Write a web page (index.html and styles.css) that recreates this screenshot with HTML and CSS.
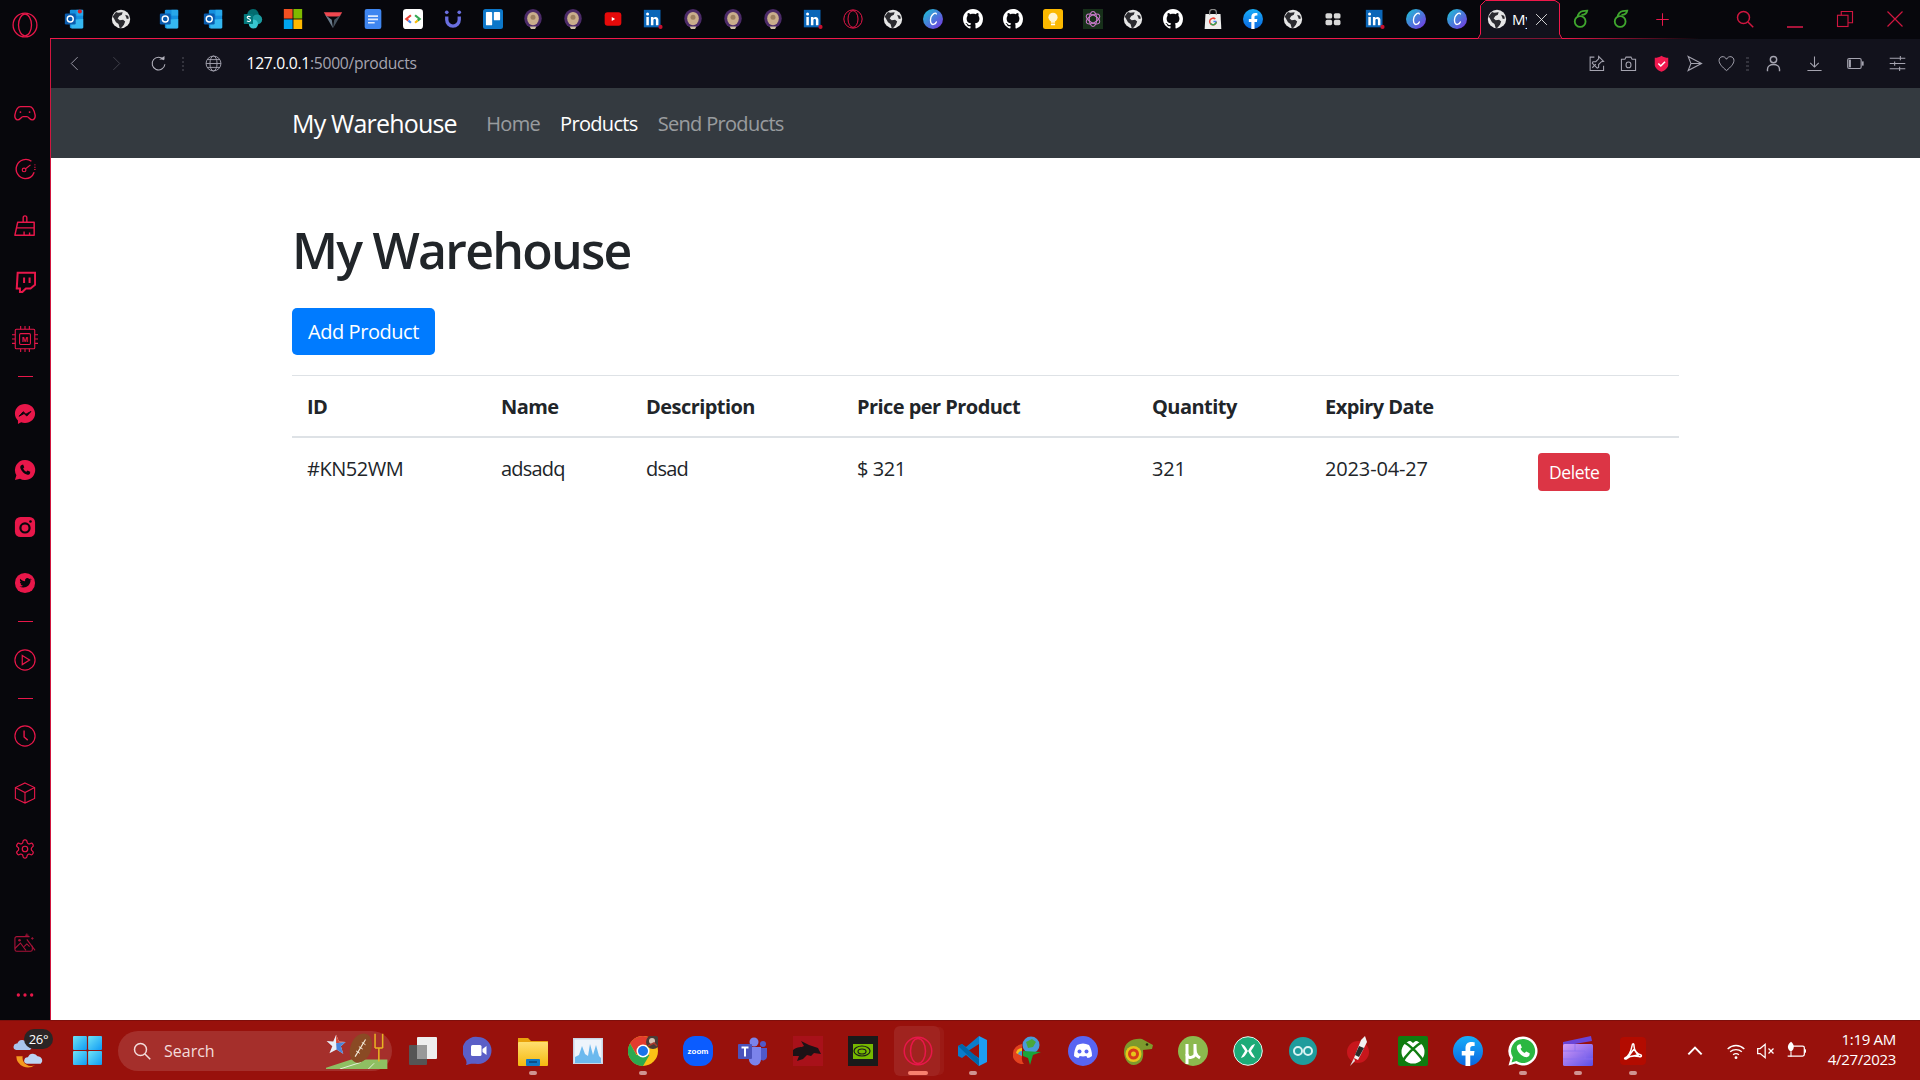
FILE: index.html
```html
<!DOCTYPE html>
<html lang="en">
<head>
<meta charset="utf-8">
<title>My Warehouse</title>
<link rel="stylesheet" href="styles.css">
</head>
<body>
<svg class="sprite" xmlns="http://www.w3.org/2000/svg" aria-hidden="true">
  <defs>
    <linearGradient id="g-canva" x1="0" y1="0" x2="1" y2="1"><stop offset="0" stop-color="#19c7d4"/><stop offset="1" stop-color="#7a2fe0"/></linearGradient>
    <linearGradient id="g-fb" x1="0" y1="0" x2="0" y2="1"><stop offset="0" stop-color="#19aef8"/><stop offset="1" stop-color="#0a66e0"/></linearGradient>
    <linearGradient id="g-win" x1="0" y1="0" x2="1" y2="1"><stop offset="0" stop-color="#6fe3f5"/><stop offset="1" stop-color="#0f9bf5"/></linearGradient>
    <linearGradient id="g-folder" x1="0" y1="0" x2="0" y2="1"><stop offset="0" stop-color="#ffdf70"/><stop offset="1" stop-color="#f5b90f"/></linearGradient>
    <linearGradient id="g-clip" x1="0" y1="0" x2="1" y2="1"><stop offset="0" stop-color="#d59cf5"/><stop offset="1" stop-color="#5a4ee8"/></linearGradient>
  </defs>
  <symbol id="i-outlook" viewBox="0 0 24 24"><rect x="7" y="1" width="16" height="22" rx="1.5" fill="#1490df"/><rect x="15" y="1" width="8" height="7" fill="#28a8ea"/><rect x="7" y="8" width="8" height="7" fill="#0f78d4"/><path d="M8 13l15-1v10a1.500 1.500 0 0 1-1.500 1.500H9z" fill="#35b8f1"/><rect x="1" y="5.500" width="13" height="13" rx="1.500" fill="#0a5cae"/><circle cx="7.500" cy="12" r="3.600" fill="none" stroke="#fff" stroke-width="1.700"/></symbol>
  <symbol id="i-outlook-dot" viewBox="0 0 24 24"><use href="#i-outlook"/><circle cx="19" cy="3" r="2.500" fill="#d4202c"/></symbol>
  <symbol id="i-globe" viewBox="0 0 24 24"><circle cx="12" cy="12" r="11" fill="#e6e6e6"/><path d="M6 3.500c3 2 6 0 8 .5l-1 3-3 1.500-2 3 2.500 2 4-.5 2.500 2-1.500 4-3 3.500-2 .5-1.500-5-3-2-2.500-4.500L2 9z" fill="#2b2b30"/><path d="M17 7l3.500 1 1 3.500-2.500.5z" fill="#2b2b30"/></symbol>
  <symbol id="i-sharepoint" viewBox="0 0 24 24"><circle cx="12" cy="7" r="7" fill="#036c70"/><circle cx="17" cy="12.500" r="6" fill="#1a9ba1"/><circle cx="12.500" cy="18" r="5.500" fill="#37c6d0"/><rect x="1" y="6" width="11" height="12" rx="1" fill="#03787c"/><path d="M9 9.500c-1-1-4-1-4 .8 0 1.900 4 1.100 4 3.300 0 1.700-3 1.700-4.300.7" fill="none" stroke="#fff" stroke-width="1.300"/></symbol>
  <symbol id="i-ms" viewBox="0 0 24 24"><rect x="1" y="0" width="10.500" height="11.500" fill="#f25022"/><rect x="12.500" y="0" width="10.500" height="11.500" fill="#7fba00"/><rect x="1" y="12.500" width="10.500" height="11.500" fill="#00a4ef"/><rect x="12.500" y="12.500" width="10.500" height="11.500" fill="#ffb900"/></symbol>
  <symbol id="i-vee" viewBox="0 0 24 24"><path d="M1 4h22l-3 5H4z" fill="#f0474f"/><path d="M1.500 5L12 23l-1.500-10L4 8z" fill="#6b7c8c"/><path d="M22.500 5L12 23l1.500-10L20 8z" fill="#45525e"/></symbol>
  <symbol id="i-docs" viewBox="0 0 24 24"><rect x="2" y="0" width="20" height="24" rx="2.500" fill="#3f86f0"/><path d="M6 8.500h12M6 12.500h12M6 16.500h8" stroke="#dfeafc" stroke-width="2"/></symbol>
  <symbol id="i-gcode" viewBox="0 0 24 24"><rect width="24" height="24" rx="4" fill="#fff"/><path d="M9.500 7.500L4 12l2.500 2" fill="none" stroke="#ea4335" stroke-width="2.600"/><path d="M6.500 14l3 2.500" fill="none" stroke="#4285f4" stroke-width="2.600"/><path d="M14.500 7.500l5.500 4.500-2.500 2" fill="none" stroke="#34a853" stroke-width="2.600"/><path d="M17.500 14l-3 2.500" fill="none" stroke="#fbbc04" stroke-width="2.600"/></symbol>
  <symbol id="i-magnet" viewBox="0 0 24 24"><path d="M4.500 9v4a7.500 7.500 0 0 0 15 0V9" fill="none" stroke="#6a6fe0" stroke-width="4"/><circle cx="4.500" cy="4" r="2.200" fill="#6a6fe0"/><circle cx="19.500" cy="4" r="2.200" fill="#6a6fe0"/></symbol>
  <symbol id="i-trello" viewBox="0 0 24 24"><rect width="24" height="24" rx="3" fill="#0c77c9"/><rect x="3.500" y="3.500" width="7.500" height="16" rx="1" fill="#fff"/><rect x="13" y="3.500" width="7.500" height="10" rx="1" fill="#fff"/></symbol>
  <symbol id="i-seal" viewBox="0 0 24 24"><ellipse cx="12" cy="11.500" rx="10.500" ry="11.500" fill="#4b2a68"/><ellipse cx="12" cy="11.500" rx="7" ry="8" fill="#c9ae8c"/><path d="M8 21h8l-1.500 3h-5z" fill="#cdbfa6"/><circle cx="12" cy="10" r="3" fill="#9c7f60"/></symbol>
  <symbol id="i-yt" viewBox="0 0 24 24"><rect x="2" y="4" width="20" height="16" rx="3.500" fill="#e60a0a"/><path d="M10.500 9.500v5l4-2.500z" fill="#fff"/></symbol>
  <symbol id="i-li" viewBox="0 0 24 24"><rect x="1" y="1" width="20" height="21" fill="#0a66b8"/><rect x="4" y="9.500" width="3" height="10" fill="#fff"/><circle cx="5.500" cy="6" r="1.800" fill="#fff"/><path d="M9.500 9.500h3v1.500c1.500-2.500 6-2 6 2v6.500h-3v-6c0-2-3-2-3 0v6h-3z" fill="#fff"/><circle cx="21" cy="21.500" r="2.500" fill="#c8102e"/></symbol>
  <symbol id="i-opera" viewBox="0 0 24 24"><circle cx="12" cy="12" r="11" fill="none" stroke="#e8174a" stroke-width="1.200"/><ellipse cx="12" cy="12" rx="6" ry="10" fill="none" stroke="#e8174a" stroke-width="1.200"/></symbol>
  <symbol id="i-canva" viewBox="0 0 24 24"><circle cx="12" cy="12" r="12" fill="url(#g-canva)"/><path d="M16 6c-1-2.500-5 0-6.500 4-1.500 5 0 9 3 8.500 1.500-.3 3-1.500 3.500-3" fill="none" stroke="#fff" stroke-width="1.600" stroke-linecap="round"/></symbol>
  <symbol id="i-github" viewBox="0 0 16 16"><path fill="#fff" d="M8 0C3.580 0 0 3.580 0 8c0 3.540 2.290 6.530 5.470 7.590.4.070.55-.17.55-.38 0-.19-.01-.82-.01-1.490-2.010.37-2.530-.49-2.690-.94-.09-.23-.48-.94-.82-1.130-.28-.15-.68-.52-.01-.53.63-.01 1.080.58 1.230.82.72 1.210 1.870.87 2.330.66.070-.52.28-.87.51-1.070-1.780-.2-3.640-.89-3.640-3.950 0-.87.31-1.590.82-2.150-.08-.2-.36-1.020.08-2.120 0 0 .67-.21 2.200.82.64-.18 1.320-.27 2-.27.68 0 1.360.09 2 .27 1.530-1.040 2.200-.82 2.200-.82.44 1.100.16 1.920.08 2.120.51.56.82 1.270.82 2.150 0 3.070-1.870 3.750-3.650 3.950.29.25.54.73.54 1.480 0 1.070-.01 1.930-.01 2.200 0 .21.15.46.55.38A8.013 8.013 0 0016 8c0-4.420-3.580-8-8-8z"/></symbol>
  <symbol id="i-keep" viewBox="0 0 24 24"><rect width="24" height="24" rx="3" fill="#fbb800"/><circle cx="12" cy="10" r="5.500" fill="#fff4d0"/><rect x="9.500" y="14" width="5" height="2.500" fill="#fff4d0"/><rect x="9.500" y="17.500" width="5" height="2" fill="#fff"/></symbol>
  <symbol id="i-gpt" viewBox="0 0 24 24"><rect width="24" height="24" fill="#17301a"/><g fill="none" stroke="#c77ac9" stroke-width="1.300"><ellipse cx="12" cy="12" rx="4.500" ry="9"/><ellipse cx="12" cy="12" rx="4.500" ry="9" transform="rotate(60 12 12)"/><ellipse cx="12" cy="12" rx="4.500" ry="9" transform="rotate(120 12 12)"/></g></symbol>
  <symbol id="i-bag" viewBox="0 0 24 24"><path d="M3 6h18l1 18H2z" fill="#eee"/><path d="M8 7V3.500a4 3 0 0 1 8 0V7" fill="none" stroke="#8a8a8a" stroke-width="1.500"/><path d="M16 15a4 4 0 1 1-1.200-2.900" fill="none" stroke="#ea4335" stroke-width="1.800"/><path d="M16 15.500a4 4 0 0 1-7 2" fill="none" stroke="#34a853" stroke-width="1.800"/><path d="M12.500 15H16" stroke="#4285f4" stroke-width="1.800"/></symbol>
  <symbol id="i-fb" viewBox="0 0 24 24"><circle cx="12" cy="12" r="12" fill="url(#g-fb)"/><path fill="#fff" d="M16.700 15.500l.5-3.500h-3.400V9.800c0-1 .5-1.900 2-1.900h1.500V5s-1.400-.2-2.700-.2c-2.800 0-4.600 1.700-4.600 4.700V12H7v3.500h3V24h3.800v-8.500z"/></symbol>
  <symbol id="i-apps" viewBox="0 0 24 24"><rect x="3" y="5" width="8" height="6.500" rx="2" fill="#d8d8d8"/><rect x="13" y="5" width="8" height="6.500" rx="2" fill="#d8d8d8"/><rect x="3" y="13" width="8" height="6.500" rx="2" fill="#d8d8d8"/><rect x="13" y="13" width="8" height="6.500" rx="2" fill="#d8d8d8"/></symbol>
  <symbol id="i-leaf" viewBox="0 0 24 24"><circle cx="11" cy="15" r="6.500" fill="none" stroke="#3fa62e" stroke-width="2.200"/><path d="M8 10c0-4 3-7 6-7.500 2-.3 4-.5 5.500-.5-.5 3-3 5-7 5" fill="none" stroke="#3fa62e" stroke-width="2.200"/></symbol>

  <symbol id="n-back" viewBox="0 0 24 24"><path d="M15 3L6 12l9 9" fill="none" stroke="currentColor" stroke-width="1.300"/></symbol>
  <symbol id="n-forward" viewBox="0 0 24 24"><path d="M9 3l9 9-9 9" fill="none" stroke="currentColor" stroke-width="1.300"/></symbol>
  <symbol id="n-reload" viewBox="0 0 24 24"><path d="M19.500 7A9 9 0 1 0 21 13" fill="none" stroke="currentColor" stroke-width="1.500"/><path d="M13 6.500h7.500V1.500z" fill="currentColor"/></symbol>
  <symbol id="n-web" viewBox="0 0 24 24"><g fill="none" stroke="currentColor" stroke-width="1.300"><circle cx="12" cy="12" r="10.500"/><ellipse cx="12" cy="12" rx="5" ry="10.500"/><path d="M1.500 12h21M3 6.500h18M3 17.500h18"/></g></symbol>
  <symbol id="n-pin" viewBox="0 0 24 24"><path d="M9 3H3v19h19v-7M15 2l7 7-3 .5-4 4v4l-2 1-7-7 1-2h4l4-4z" fill="none" stroke="currentColor" stroke-width="1.500"/><path d="M6 18l5-5" stroke="currentColor" stroke-width="1.500"/></symbol>
  <symbol id="n-camera" viewBox="0 0 24 24"><path d="M2 6h5l1.500-3h7L17 6h5v16H2z" fill="none" stroke="currentColor" stroke-width="1.500"/><ellipse cx="12" cy="14" rx="3.500" ry="4" fill="none" stroke="currentColor" stroke-width="1.500"/></symbol>
  <symbol id="n-shield" viewBox="0 0 24 24"><path d="M12 1c3 2 6 3 9.500 3v10c0 4-5 8-9.500 9.500C7.500 22 2.500 18 2.500 14V4C6 4 9 3 12 1z" fill="#f0194f"/><path d="M7.500 12l3.500 3.500 6-6" fill="none" stroke="#fff" stroke-width="2.200"/></symbol>
  <symbol id="n-send" viewBox="0 0 24 24"><path d="M3 2l19 10L3 22l4-10z M7 12h15" fill="none" stroke="currentColor" stroke-width="1.500"/></symbol>
  <symbol id="n-heart" viewBox="0 0 24 24"><path d="M12 22C6 17 1.500 12.500 1.500 7.500 1.500 2 9 0 12 6c3-6 10.500-4 10.500 1.500C22.500 12.500 18 17 12 22z" fill="none" stroke="currentColor" stroke-width="1.400"/></symbol>
  <symbol id="n-user" viewBox="0 0 24 24"><circle cx="12" cy="6.500" r="4.500" fill="none" stroke="currentColor" stroke-width="2"/><path d="M3.500 23v-3c0-4 4-6.500 8.500-6.500s8.500 2.500 8.500 6.500v3" fill="none" stroke="currentColor" stroke-width="2"/></symbol>
  <symbol id="n-download" viewBox="0 0 24 24"><path d="M12 2v15M6 11l6 6 6-6M2 22h20" fill="none" stroke="currentColor" stroke-width="1.500"/></symbol>
  <symbol id="n-battery" viewBox="0 0 24 24"><rect x="1" y="5" width="19" height="14" rx="2" fill="none" stroke="currentColor" stroke-width="1.600"/><rect x="2.500" y="6.500" width="3" height="11" fill="currentColor"/><rect x="21" y="9" width="2.500" height="6" fill="currentColor"/></symbol>
  <symbol id="n-sliders" viewBox="0 0 24 24"><path d="M1 4.500h22M1 12h22M1 19.500h22M16 1.500v6M8 9v6M15 16.500v6" fill="none" stroke="currentColor" stroke-width="1.500"/></symbol>
  <symbol id="n-search" viewBox="0 0 24 24"><circle cx="10" cy="10" r="8" fill="none" stroke="currentColor" stroke-width="2"/><path d="M16 16l7 7" stroke="currentColor" stroke-width="2"/></symbol>
  <symbol id="n-restore" viewBox="0 0 24 24"><rect x="2" y="7" width="14" height="15" fill="none" stroke="currentColor" stroke-width="1.500"/><path d="M7 7V2h15v15h-6" fill="none" stroke="currentColor" stroke-width="1.500"/></symbol>
  <symbol id="n-close" viewBox="0 0 24 24"><path d="M2 2l20 20M22 2L2 22" stroke="currentColor" stroke-width="1.600"/></symbol>
  <symbol id="n-plus" viewBox="0 0 24 24"><path d="M12 2v20M2 12h20" stroke="currentColor" stroke-width="1.600"/></symbol>

  <symbol id="s-game" viewBox="0 0 24 24"><path d="M7 5h10c3 0 5 4 6 9 .5 3-1 5.500-3 5.500-3 0-3.500-3.500-6-3.500h-4c-2.500 0-3 3.500-6 3.500-2 0-3.500-2.500-3-5.500C2 9 4 5 7 5z" fill="none" stroke="currentColor" stroke-width="1.500"/><circle cx="7" cy="11" r="1" fill="currentColor"/><circle cx="17" cy="11" r="1" fill="currentColor"/></symbol>
  <symbol id="s-gauge" viewBox="0 0 24 24"><path d="M19 3.500A10.500 10.500 0 1 0 12 22.500c5 0 8.500-3 10-7" fill="none" stroke="currentColor" stroke-width="1.500"/><circle cx="11" cy="13" r="2" fill="none" stroke="currentColor" stroke-width="1.300"/><path d="M13 11.500l5-4" stroke="currentColor" stroke-width="1.300"/><path d="M22.800 7v6" stroke="currentColor" stroke-width="1.500" stroke-dasharray="1 1.500"/></symbol>
  <symbol id="s-broom" viewBox="0 0 24 24"><path d="M10 8V3a2 2 0 0 1 4 0v5" fill="none" stroke="currentColor" stroke-width="1.500"/><path d="M4 8h18v14H1z" fill="none" stroke="currentColor" stroke-width="1.600" stroke-linejoin="round"/><path d="M3 14h19M11 22v-4M17 22v-3" stroke="currentColor" stroke-width="1.500"/></symbol>
  <symbol id="s-twitch" viewBox="0 0 24 24"><path d="M4 2h19v13l-5 4h-5l-4 4H6.500v-4H3z" fill="none" stroke="currentColor" stroke-width="2.200"/><path d="M11 7v6M17 7v6" stroke="currentColor" stroke-width="2.200"/></symbol>
  <symbol id="s-chip" viewBox="0 0 24 24"><g fill="none" stroke="currentColor" stroke-width="1"><rect x="3" y="3" width="18" height="18" rx="1"/><rect x="7" y="7" width="10" height="10" rx="1"/><path d="M8 3V0M12 3V0M16 3V0M8 24v-3M12 24v-3M16 24v-3M3 8H0M3 12H0M3 16H0M24 8h-3M24 12h-3M24 16h-3"/></g></symbol>
  <symbol id="s-messenger" viewBox="0 0 24 24"><path d="M12 1C5.700 1 1 5.500 1 11.500c0 3.100 1.300 5.800 3.300 7.700V23l3.500-2c1.300.5 2.700.7 4.200.7 6.300 0 11-4.500 11-10.200S18.300 1 12 1z" fill="currentColor"/><path d="M5.500 14.500l4.500-5 3 2.700 5.500-3-4.500 5-3-2.700z" fill="#07070c" stroke="#07070c"/></symbol>
  <symbol id="s-whatsapp" viewBox="0 0 24 24"><path d="M12 1a11 11 0 0 0-9.400 16.600L1 23l5.600-1.500A11 11 0 1 0 12 1z" fill="currentColor"/><path d="M8.500 6.500c-1.500.5-2 2-1.500 3.500 1 3 4 6 7 7 1.500.5 3 0 3.500-1.500l.2-1.500-3-1.500-1.200 1.300c-1.500-.5-3-2-3.500-3.500l1.200-1.200-1.300-3z" fill="#07070c"/></symbol>
  <symbol id="s-instagram" viewBox="0 0 24 24"><rect x="1" y="1" width="22" height="22" rx="6" fill="currentColor"/><circle cx="12" cy="13" r="5" fill="none" stroke="#07070c" stroke-width="2.400"/><circle cx="18" cy="6" r="1.400" fill="#07070c"/></symbol>
  <symbol id="s-twitter" viewBox="0 0 24 24"><circle cx="12" cy="12" r="11" fill="currentColor"/><path d="M18.500 8c-.5.200-1 .4-1.500.4.500-.3 1-.8 1.200-1.400-.5.300-1 .5-1.600.6a2.600 2.600 0 0 0-4.500 2.400c-2.100-.1-4-1.100-5.300-2.700-.7 1.200-.3 2.700.8 3.500-.4 0-.8-.1-1.200-.3 0 1.300.9 2.400 2.100 2.600-.4.100-.8.100-1.200 0 .3 1.100 1.300 1.800 2.500 1.800-1 .8-2.400 1.200-3.800 1 5.500 3 12.300-.5 12-7.100.5-.2 1-.5 1.500-.8z" fill="#07070c"/></symbol>
  <symbol id="s-play" viewBox="0 0 24 24"><circle cx="12" cy="12" r="11" fill="none" stroke="currentColor" stroke-width="1.300"/><path d="M9 7l8 5-8 5z" fill="none" stroke="currentColor" stroke-width="1.300"/></symbol>
  <symbol id="s-clock" viewBox="0 0 24 24"><circle cx="12" cy="12" r="11" fill="none" stroke="currentColor" stroke-width="1.300"/><path d="M11 6v7l4 3.500" fill="none" stroke="currentColor" stroke-width="1.500"/></symbol>
  <symbol id="s-cube" viewBox="0 0 24 24"><path d="M12 1l10.500 5v12L12 23 1.500 18V6zM1.500 6L12 11.500 22.500 6M12 11.500V23" fill="none" stroke="currentColor" stroke-width="1.200"/></symbol>
  <symbol id="s-gear" viewBox="0 0 24 24"><path fill="none" stroke="currentColor" stroke-width="1.300" d="M12.220 2h-.44a2 2 0 0 0-2 2v.18a2 2 0 0 1-1 1.730l-.43.25a2 2 0 0 1-2 0l-.15-.08a2 2 0 0 0-2.730.73l-.22.38a2 2 0 0 0 .73 2.730l.15.1a2 2 0 0 1 1 1.720v.51a2 2 0 0 1-1 1.740l-.15.09a2 2 0 0 0-.73 2.730l.22.38a2 2 0 0 0 2.730.73l.15-.08a2 2 0 0 1 2 0l.43.25a2 2 0 0 1 1 1.730V20a2 2 0 0 0 2 2h.44a2 2 0 0 0 2-2v-.18a2 2 0 0 1 1-1.730l.43-.25a2 2 0 0 1 2 0l.15.08a2 2 0 0 0 2.730-.73l.22-.39a2 2 0 0 0-.73-2.730l-.15-.08a2 2 0 0 1-1-1.740v-.5a2 2 0 0 1 1-1.740l.15-.09a2 2 0 0 0 .73-2.730l-.22-.38a2 2 0 0 0-2.730-.73l-.15.08a2 2 0 0 1-2 0l-.43-.25a2 2 0 0 1-1-1.730V4a2 2 0 0 0-2-2z"/><circle cx="12" cy="12" r="3" fill="none" stroke="currentColor" stroke-width="1.300"/></symbol>
  <symbol id="s-image" viewBox="0 0 24 24"><path d="M17 5H3a2 2 0 0 0-2 2v12a2 2 0 0 0 2 2h15a2 2 0 0 0 2-2v-4" fill="none" stroke="currentColor" stroke-width="1.200"/><path d="M1 18l6-6 6 8M11 16l3-3 3 3" fill="none" stroke="currentColor" stroke-width="1.200"/><circle cx="6" cy="9" r="1.400" fill="currentColor"/><path d="M14 8l9 12" stroke="currentColor" stroke-width="1.200"/><path d="M14 1.500v4M12 3.500h4M20 5.500v3M18.500 7h3" stroke="currentColor" stroke-width=".9"/></symbol>
  <symbol id="s-dots" viewBox="0 0 24 24"><circle cx="4" cy="12" r="2" fill="currentColor"/><circle cx="12" cy="12" r="2" fill="currentColor"/><circle cx="20" cy="12" r="2" fill="currentColor"/></symbol>

  <symbol id="t-windows" viewBox="0 0 24 24"><rect width="11.500" height="11.500" x="0" y="0" rx=".8" fill="url(#g-win)"/><rect width="11.500" height="11.500" x="12.500" y="0" rx=".8" fill="url(#g-win)"/><rect width="11.500" height="11.500" x="0" y="12.500" rx=".8" fill="url(#g-win)"/><rect width="11.500" height="11.500" x="12.500" y="12.500" rx=".8" fill="url(#g-win)"/></symbol>
  <symbol id="t-weather" viewBox="0 0 32 32"><path d="M4 14a3 3 0 0 1 1-6 5 5 0 0 1 9-1 4 4 0 0 1 3 7z" fill="#a9c4ec"/><path d="M4 20a11 11 0 0 0 18 8 8 8 0 0 1-12-8z" fill="#f59a1f"/><path d="M14 27a3 3 0 0 1 1-6 5 5 0 0 1 9-1 4 4 0 0 1 3 7z" fill="#bcd4f2"/></symbol>
  <symbol id="t-football" viewBox="0 0 64 40"><path d="M-5 40L26 30h38v10z" fill="#8fbf62"/><path d="M14 40l22-7M44 40l6-6" stroke="#e8f0dc" stroke-width="1"/><path d="M10 4l3 7 7 .5-5 4.500 2.500 8-7-4.500-7.500 4 3-7.500L0 10.500l7 .5z" fill="#e9eef8"/><path d="M10 4l3 7 7 .5-10 1.500z" fill="#d8432f"/><path d="M10 13l10-1.500-5 4.500 2.500 8-7-4.500z" fill="#4a82d8"/><ellipse cx="36" cy="18" rx="11" ry="16" transform="rotate(22 36 18)" fill="#8a4a24"/><path d="M30 27l11-18" stroke="#f3ead8" stroke-width="1.200"/><path d="M31 21l4 2.500M34 16.500l4 2.500M37 12l4 2.500" stroke="#f3ead8" stroke-width="1"/><path d="M51 3v15M59 3v15M51 18h8M55 18v14" fill="none" stroke="#e8b422" stroke-width="1.600"/></symbol>
  <symbol id="t-taskview" viewBox="0 0 30 30"><rect x="1" y="9" width="18" height="20" rx="1" fill="#555"/><rect x="9" y="1" width="20" height="22" rx="1" fill="#eee"/><rect x="9" y="9" width="10" height="14" fill="#999"/></symbol>
  <symbol id="t-meet" viewBox="0 0 30 30"><path d="M15 1a13.500 13.500 0 0 1 0 27c-3 0-6-.5-8 0-3 1-4 1-4 1 1-2 .5-4-.5-6A13.500 13.500 0 0 1 15 1z" fill="#5b5fc7"/><rect x="8" y="9" width="10.500" height="11" rx="1.500" fill="#fff"/><path d="M19.500 13l4-3v9l-4-3z" fill="#fff"/></symbol>
  <symbol id="t-folder" viewBox="0 0 30 30"><path d="M0 2h10l3 3h17v4H0z" fill="#e9a20c"/><rect y="6" width="30" height="24" rx="1" fill="url(#g-folder)"/><rect x="8" y="23" width="14" height="7" rx="1" fill="#0f78c4"/><rect x="11" y="25" width="8" height="2" fill="#0b4f8a"/></symbol>
  <symbol id="t-monitor" viewBox="0 0 30 30"><rect y="2" width="30" height="26" fill="#c9d6e6"/><rect x="1.500" y="3.500" width="27" height="23" fill="#eef4fb"/><path d="M2 21l4-2 3-9 3 8 3 2 2-12 3 11 3-10 3 11 2 2v5H2z" fill="#6cb9ee"/></symbol>
  <symbol id="t-chrome" viewBox="0 0 30 30"><circle cx="15" cy="15" r="15" fill="#fbc116"/><path d="M15 0A15 15 0 0 0 2 7.500l6.500 11L15 9h13A15 15 0 0 0 15 0z" fill="#e33b2e"/><path d="M2 7.500A15 15 0 0 0 15 30l6.500-11h-13z" fill="#2da94f"/><circle cx="15" cy="15" r="6.500" fill="#fff"/><circle cx="15" cy="15" r="5" fill="#1a73e8"/><circle cx="25" cy="6" r="7" fill="#4a3b36"/><circle cx="24" cy="5" r="3" fill="#d8c2b2"/><path d="M20 10l6-3 3 3" stroke="#a83a2c" stroke-width="1.500" fill="none"/></symbol>
  <symbol id="t-zoom" viewBox="0 0 30 30"><rect width="30" height="30" rx="12" fill="#0b5cff"/></symbol>
  <symbol id="t-teams" viewBox="0 0 30 30"><circle cx="16" cy="6" r="4.500" fill="#7b83eb"/><circle cx="25" cy="8" r="3" fill="#5059c9"/><path d="M21 12h8v9a4 4 0 0 1-7 2z" fill="#5059c9"/><path d="M9 11h14v12a6 6 0 0 1-12 1z" fill="#7b83eb"/><rect x="0" y="8" width="14" height="15" rx="1" fill="#4b53bc"/><path d="M3.500 11.500h7M7 11.500v9" stroke="#fff" stroke-width="2"/></symbol>
  <symbol id="t-dragon" viewBox="0 0 30 30"><rect width="30" height="30" fill="#a8111a"/><path d="M0 14c5-4 8-2 11-4l-3-5 8 4 9 3 3 6-7-1-3 3-4-1-4 4-6 2 2-5-6 0z" fill="#1d1216"/></symbol>
  <symbol id="t-nvidia" viewBox="0 0 30 30"><rect width="30" height="30" fill="#1a1a1a"/><rect x="5" y="8" width="20" height="15" fill="#76b900"/><g fill="none" stroke="#1a1a1a" stroke-width="1.200"><ellipse cx="14" cy="15" rx="8" ry="5"/><ellipse cx="14" cy="15.500" rx="4" ry="2.500"/></g></symbol>
  <symbol id="t-vscode" viewBox="0 0 30 30"><path d="M21 0l8 4v22l-8 4z" fill="#1f9cf0"/><path d="M21 0v8L10 15l11 7v8L8 19 4 22 0 20V10l4-2 4 3z" fill="#0a7ccb"/><path d="M0 10l4-2 17 15v7z" fill="#0065a9"/></symbol>
  <symbol id="t-idm" viewBox="0 0 30 30"><path d="M0 17a11 10 0 0 1 9-9v13a8 8 0 0 0 2 7 10 9 0 0 1-11-11z" fill="#e3421f"/><path d="M3 17a7 6 0 0 1 6-5v8z" fill="#f2c21a"/><path d="M5 18a4 4 0 0 1 4-3v5z" fill="#3f9be0"/><circle cx="18" cy="9" r="8.500" fill="#4a9bd8"/><path d="M13 6l6-3 4 3-3 5-5 1z" fill="#4aa83a"/><path d="M10 15l18 1-8 3-3 10-2-7-5-2z" fill="#19a53a"/></symbol>
  <symbol id="t-discord" viewBox="0 0 30 30"><circle cx="15" cy="15" r="15" fill="#5865f2"/><path d="M9 9c4-2 8-2 12 0 2 3 3 7 3 11-1.500 1-3 2-4.500 2l-1.200-2c-2 .6-4.600.6-6.600 0L10.500 22C9 22 7.500 21 6 20c0-4 1-8 3-11z" fill="#fff"/><circle cx="11.500" cy="15.500" r="2" fill="#5865f2"/><circle cx="18.500" cy="15.500" r="2" fill="#5865f2"/></symbol>
  <symbol id="t-chameleon" viewBox="0 0 30 30"><path d="M1 16C1 6 10 2 19 3l11 6-1 4-9 1c1 8-1 14-9 15C5 29.500 1 22 1 16z" fill="#7d9a2d"/><circle cx="10.500" cy="18" r="8" fill="#e6c41a"/><circle cx="10.500" cy="18" r="5.500" fill="#d83a1a"/><circle cx="10.500" cy="18" r="2.500" fill="#e6c41a"/><circle cx="24" cy="8.500" r="1.300" fill="#26300c"/></symbol>
  <symbol id="t-utorrent" viewBox="0 0 30 30"><circle cx="15" cy="15" r="15" fill="#8cb94e"/><path d="M9 8v10c0 4 5 5 8 1V8M17 8c0 8 0 11 5 14" fill="none" stroke="#fff" stroke-width="3"/><path d="M9 18v10" stroke="#fff" stroke-width="3"/></symbol>
  <symbol id="t-xmind" viewBox="0 0 30 30"><circle cx="15" cy="15" r="14.300" fill="#1dab78" stroke="#e6f5ee" stroke-width="1"/><path d="M8 8c4 1 5 4 7 7-2 3-3 6-7 7 1-3 3-5 4-7-1-2-3-4-4-7zM22 8c-4 1-5 4-7 7 2 3 3 6 7 7-1-3-3-5-4-7 1-2 3-4 4-7z" fill="#fff"/></symbol>
  <symbol id="t-arduino" viewBox="0 0 30 30"><circle cx="15" cy="15" r="14" fill="#1f9c9c"/><circle cx="10" cy="15" r="4" fill="none" stroke="#d9f2f2" stroke-width="2"/><circle cx="20" cy="15" r="4" fill="none" stroke="#d9f2f2" stroke-width="2"/></symbol>
  <symbol id="t-rocket" viewBox="0 0 30 30"><circle cx="15" cy="16" r="11" fill="#c8161c"/><path d="M22 0l2 6-9 18-4-2 7-18z" fill="#f2f2f2"/><path d="M11 22l-4 8 5-5z" fill="#e0e0e0"/><path d="M16 10l5 2-5 9-4-2z" fill="#2b2b2b"/></symbol>
  <symbol id="t-xbox" viewBox="0 0 30 30"><rect width="30" height="30" rx="2" fill="#107c10"/><circle cx="15" cy="16" r="11.500" fill="#fff"/><path d="M3 4C8 7 20 15 27 28M27 4C22 7 10 15 3 28" fill="none" stroke="#107c10" stroke-width="2.600"/><path d="M8 4c3 0 5 1 7 3 2-2 4-3 7-3l-7-1z" fill="#107c10"/></symbol>
  <symbol id="t-whatsapp" viewBox="0 0 30 30"><path d="M15 0.500A14.500 14.500 0 0 0 2.500 22.500L0.500 29.500l7.200-2A14.500 14.500 0 1 0 15 .5z" fill="#fff"/><path d="M15 3A12 12 0 0 0 5 21.500L3.500 26.500l5-1.500A12 12 0 1 0 15 3z" fill="#2bb741"/><path d="M11 8.500c-2 .5-2.500 2.500-2 4.500 1.200 3.600 4.500 7 8 8 2 .5 4-.2 4.500-2l.2-1.800-3.500-1.800-1.500 1.600c-1.800-.6-3.500-2.400-4.200-4.200l1.400-1.400-1.500-3.500z" fill="#fff"/></symbol>
  <symbol id="t-clip" viewBox="0 0 30 30"><path d="M0 6l28-6 1 5L0 10z" fill="#6a45d8"/><rect y="8" width="30" height="22" rx="1.500" fill="url(#g-clip)"/><path d="M0 15h12v-7M12 15h10v8M0 23h30" stroke="#8a6ef0" stroke-width=".8" fill="none"/></symbol>
  <symbol id="t-acrobat" viewBox="0 0 30 30"><rect x="2" y="1" width="26" height="28" rx="4" fill="#b30b00"/><path d="M7 22c3-1 6-6 7-12 .3-3 2-3 2 0 0 4 3 8 7 9 1 1 0 2-2 1.500-5-1-9-1-12 2-2 1-3 0-2-.5zM10 21l6-8 4 6z" fill="none" stroke="#fff" stroke-width="1.500"/></symbol>
  <symbol id="t-chevron" viewBox="0 0 24 24"><path d="M4 16l8-8 8 8" fill="none" stroke="#fff" stroke-width="2.400"/></symbol>
  <symbol id="t-wifi" viewBox="0 0 24 24"><g fill="none" stroke="#fff" stroke-width="1.600"><path d="M2 9.500c6-5.500 14-5.500 20 0"/><path d="M5 13c4-3.500 10-3.500 14 0"/><path d="M8.500 16.500c2-1.500 5-1.500 7 0"/></g><circle cx="12" cy="20" r="1.700" fill="#fff"/></symbol>
  <symbol id="t-mute" viewBox="0 0 24 24"><path d="M2 9h3l6-5v16l-6-5H2z" fill="none" stroke="#fff" stroke-width="1.500"/><path d="M15 9l6 6M21 9l-6 6" stroke="#fff" stroke-width="1.500"/></symbol>
  <symbol id="t-battery" viewBox="0 0 24 24"><path d="M8 6h12a2 2 0 0 1 2 2v8a2 2 0 0 1-2 2H2" fill="none" stroke="#fff" stroke-width="1.500"/><path d="M6 1c4 3 5 8 0 12C1 10 1 5 6 1z" fill="#fff"/><rect x="22.500" y="10" width="1.500" height="4" fill="#fff"/><path d="M6 13v6" stroke="#fff" stroke-width="1.300"/></symbol>
</svg>

<div class="desktop">
  <div class="upper">
    <aside class="sidebar">
      <div class="side-logo"><svg class="ico-logo"><use href="#i-opera"/></svg></div>
      <div class="side-item"><svg class="ico-side"><use href="#s-game"/></svg></div>
      <div class="side-item"><svg class="ico-side"><use href="#s-gauge"/></svg></div>
      <div class="side-item"><svg class="ico-side"><use href="#s-broom"/></svg></div>
      <div class="side-item"><svg class="ico-side"><use href="#s-twitch"/></svg></div>
      <div class="side-item"><svg class="ico-chip" viewBox="0 0 24 24"><use href="#s-chip"/><text class="chip-m" x="12" y="14.500" text-anchor="middle">M</text></svg></div>
      <div class="side-sep"></div>
      <div class="side-item"><svg class="ico-side"><use href="#s-messenger"/></svg></div>
      <div class="side-item"><svg class="ico-side"><use href="#s-whatsapp"/></svg></div>
      <div class="side-item"><svg class="ico-side"><use href="#s-instagram"/></svg></div>
      <div class="side-item"><svg class="ico-side"><use href="#s-twitter"/></svg></div>
      <div class="side-sep wide"></div>
      <div class="side-item"><svg class="ico-side"><use href="#s-play"/></svg></div>
      <div class="side-sep wide"></div>
      <div class="side-item"><svg class="ico-side"><use href="#s-clock"/></svg></div>
      <div class="side-item"><svg class="ico-side"><use href="#s-cube"/></svg></div>
      <div class="side-item"><svg class="ico-side"><use href="#s-gear"/></svg></div>
      <div class="side-foot">
        <div class="side-foot-item dim"><svg class="ico-side"><use href="#s-image"/></svg></div>
        <div class="side-foot-item"><svg class="ico-dots"><use href="#s-dots"/></svg></div>
      </div>
    </aside>

    <div class="browser">
      <div class="tabstrip">
        <div class="tab-pin"><svg class="ico-tab"><use href="#i-outlook-dot"/></svg></div>
        <div class="tab-pin gap-7"><svg class="ico-tab"><use href="#i-globe"/></svg></div>
        <div class="tab-pin gap-8"><svg class="ico-tab"><use href="#i-outlook"/></svg></div>
        <div class="tab-pin gap-4"><svg class="ico-tab"><use href="#i-outlook"/></svg></div>
        <div class="tab-pin"><svg class="ico-tab"><use href="#i-sharepoint"/></svg></div>
        <div class="tab-pin"><svg class="ico-tab"><use href="#i-ms"/></svg></div>
        <div class="tab-pin"><svg class="ico-tab"><use href="#i-vee"/></svg></div>
        <div class="tab-pin"><svg class="ico-tab"><use href="#i-docs"/></svg></div>
        <div class="tab-pin"><svg class="ico-tab"><use href="#i-gcode"/></svg></div>
        <div class="tab-pin"><svg class="ico-tab"><use href="#i-magnet"/></svg></div>
        <div class="tab-pin"><svg class="ico-tab"><use href="#i-trello"/></svg></div>
        <div class="tab-pin"><svg class="ico-tab"><use href="#i-seal"/></svg></div>
        <div class="tab-pin"><svg class="ico-tab"><use href="#i-seal"/></svg></div>
        <div class="tab-pin"><svg class="ico-tab"><use href="#i-yt"/></svg></div>
        <div class="tab-pin"><svg class="ico-tab"><use href="#i-li"/></svg></div>
        <div class="tab-pin"><svg class="ico-tab"><use href="#i-seal"/></svg></div>
        <div class="tab-pin"><svg class="ico-tab"><use href="#i-seal"/></svg></div>
        <div class="tab-pin"><svg class="ico-tab"><use href="#i-seal"/></svg></div>
        <div class="tab-pin"><svg class="ico-tab"><use href="#i-li"/></svg></div>
        <div class="tab-pin"><svg class="ico-tab"><use href="#i-opera"/></svg></div>
        <div class="tab-pin"><svg class="ico-tab"><use href="#i-globe"/></svg></div>
        <div class="tab-pin"><svg class="ico-tab"><use href="#i-canva"/></svg></div>
        <div class="tab-pin"><svg class="ico-tab"><use href="#i-github"/></svg></div>
        <div class="tab-pin"><svg class="ico-tab"><use href="#i-github"/></svg></div>
        <div class="tab-pin"><svg class="ico-tab"><use href="#i-keep"/></svg></div>
        <div class="tab-pin"><svg class="ico-tab"><use href="#i-gpt"/></svg></div>
        <div class="tab-pin"><svg class="ico-tab"><use href="#i-globe"/></svg></div>
        <div class="tab-pin"><svg class="ico-tab"><use href="#i-github"/></svg></div>
        <div class="tab-pin"><svg class="ico-tab"><use href="#i-bag"/></svg></div>
        <div class="tab-pin"><svg class="ico-tab"><use href="#i-fb"/></svg></div>
        <div class="tab-pin"><svg class="ico-tab"><use href="#i-globe"/></svg></div>
        <div class="tab-pin"><svg class="ico-tab"><use href="#i-apps"/></svg></div>
        <div class="tab-pin gap-2"><svg class="ico-tab"><use href="#i-li"/></svg></div>
        <div class="tab-pin gap-1"><svg class="ico-tab"><use href="#i-canva"/></svg></div>
        <div class="tab-pin gap-1"><svg class="ico-tab"><use href="#i-canva"/></svg></div>
        <div class="tab-active">
          <svg class="tab-shape" viewBox="0 0 88 39"><path d="M0 38.500H2L4.500 34V5.500L9.500 .5H79L83.500 3.500V34L86 38.500H88" fill="#12121c" stroke="#f0184a"/></svg>
          <svg class="ico-tab tab-fav"><use href="#i-globe"/></svg>
          <span class="tab-title">My</span>
          <svg class="ico-tab-close"><use href="#n-close"/></svg>
        </div>
        <div class="tab-pin after-active"><svg class="ico-tab"><use href="#i-leaf"/></svg></div>
        <div class="tab-pin"><svg class="ico-tab"><use href="#i-leaf"/></svg></div>
        <div class="tab-plus"><svg class="ico-plus"><use href="#n-plus"/></svg></div>
        <div class="win-controls">
          <div class="win-btn"><svg class="ico-win"><use href="#n-search"/></svg></div>
          <div class="win-btn"><span class="win-min"></span></div>
          <div class="win-btn"><svg class="ico-win"><use href="#n-restore"/></svg></div>
          <div class="win-btn"><svg class="ico-win"><use href="#n-close"/></svg></div>
        </div>
      </div>

      <div class="window">
        <div class="addressbar">
          <div class="nav-btn first"><svg class="ico-nav"><use href="#n-back"/></svg></div>
          <div class="nav-btn off"><svg class="ico-nav"><use href="#n-forward"/></svg></div>
          <div class="nav-btn reload"><svg class="ico-nav"><use href="#n-reload"/></svg></div>
          <span class="vdots"></span>
          <div class="nav-btn web"><svg class="ico-nav"><use href="#n-web"/></svg></div>
          <div class="url"><span class="url-host">127.0.0.1</span>:5000/products</div>
          <div class="actions">
            <div class="act"><svg class="ico-act"><use href="#n-pin"/></svg></div>
            <div class="act"><svg class="ico-act"><use href="#n-camera"/></svg></div>
            <div class="act nudge"><svg class="ico-act"><use href="#n-shield"/></svg></div>
            <div class="act nudge"><svg class="ico-act"><use href="#n-send"/></svg></div>
            <div class="act"><svg class="ico-act"><use href="#n-heart"/></svg></div>
            <span class="vdots act-dots"></span>
            <div class="act user"><svg class="ico-act"><use href="#n-user"/></svg></div>
            <div class="act wide"><svg class="ico-act"><use href="#n-download"/></svg></div>
            <div class="act wide"><svg class="ico-act"><use href="#n-battery"/></svg></div>
            <div class="act wider"><svg class="ico-act"><use href="#n-sliders"/></svg></div>
          </div>
        </div>

        <nav class="navbar">
          <div class="container nav-inner">
            <a class="brand" href="#">My Warehouse</a>
            <a class="nav-link" href="#">Home</a>
            <a class="nav-link active" href="#">Products</a>
            <a class="nav-link" href="#">Send Products</a>
          </div>
        </nav>

        <main class="container content">
          <h1 class="title">My Warehouse</h1>
          <a class="btn btn-primary" href="#">Add Product</a>
          <table class="table">
            <colgroup>
              <col class="c-id"><col class="c-name"><col class="c-desc"><col class="c-price"><col class="c-qty"><col class="c-exp"><col class="c-act">
            </colgroup>
            <thead>
              <tr><th>ID</th><th>Name</th><th>Description</th><th>Price per Product</th><th>Quantity</th><th>Expiry Date</th><th></th></tr>
            </thead>
            <tbody>
              <tr><td>#KN52WM</td><td class="word">adsadq</td><td class="word">dsad</td><td>$ 321</td><td class="num">321</td><td class="num">2023-04-27</td><td><a class="btn btn-danger" href="#">Delete</a></td></tr>
            </tbody>
          </table>
        </main>
      </div>
    </div>
  </div>

  <footer class="taskbar">
    <div class="weather"><svg class="ico-weather"><use href="#t-weather"/></svg><span class="temp">26°</span></div>
    <div class="start"><svg class="ico-start"><use href="#t-windows"/></svg></div>
    <div class="search">
      <svg class="ico-search"><use href="#n-search"/></svg>
      <span class="search-text">Search</span>
      <svg class="ico-football"><use href="#t-football"/></svg>
    </div>
    <div class="task-row">
      <div class="task"><svg class="ico-task"><use href="#t-taskview"/></svg></div>
      <div class="task"><svg class="ico-task"><use href="#t-meet"/></svg></div>
      <div class="task run"><svg class="ico-task"><use href="#t-folder"/></svg></div>
      <div class="task"><svg class="ico-task"><use href="#t-monitor"/></svg></div>
      <div class="task run"><svg class="ico-task"><use href="#t-chrome"/></svg></div>
      <div class="task"><svg class="ico-task" viewBox="0 0 30 30"><use href="#t-zoom"/><text class="zoom-word" x="15" y="17.500" text-anchor="middle">zoom</text></svg></div>
      <div class="task"><svg class="ico-task"><use href="#t-teams"/></svg></div>
      <div class="task"><svg class="ico-task"><use href="#t-dragon"/></svg></div>
      <div class="task"><svg class="ico-task"><use href="#t-nvidia"/></svg></div>
      <div class="task focus"><svg class="ico-task"><use href="#i-opera"/></svg></div>
      <div class="task run"><svg class="ico-task"><use href="#t-vscode"/></svg></div>
      <div class="task"><svg class="ico-task"><use href="#t-idm"/></svg></div>
      <div class="task"><svg class="ico-task"><use href="#t-discord"/></svg></div>
      <div class="task"><svg class="ico-task"><use href="#t-chameleon"/></svg></div>
      <div class="task"><svg class="ico-task"><use href="#t-utorrent"/></svg></div>
      <div class="task"><svg class="ico-task"><use href="#t-xmind"/></svg></div>
      <div class="task"><svg class="ico-task"><use href="#t-arduino"/></svg></div>
      <div class="task"><svg class="ico-task"><use href="#t-rocket"/></svg></div>
      <div class="task"><svg class="ico-task"><use href="#t-xbox"/></svg></div>
      <div class="task"><svg class="ico-task"><use href="#i-fb"/></svg></div>
      <div class="task run"><svg class="ico-task"><use href="#t-whatsapp"/></svg></div>
      <div class="task run"><svg class="ico-task"><use href="#t-clip"/></svg></div>
      <div class="task run"><svg class="ico-task"><use href="#t-acrobat"/></svg></div>
    </div>
    <div class="tray">
      <div class="tray-item chev"><svg class="ico-tray"><use href="#t-chevron"/></svg></div>
      <div class="tray-item"><svg class="ico-tray"><use href="#t-wifi"/></svg></div>
      <div class="tray-item"><svg class="ico-tray"><use href="#t-mute"/></svg></div>
      <div class="tray-item"><svg class="ico-tray"><use href="#t-battery"/></svg></div>
    </div>
    <div class="clock"><span>1:19 AM</span><span>4/27/2023</span></div>
  </footer>
</div>
</body>
</html>
```
FILE: styles.css
```css
* { box-sizing: border-box; }
html, body { margin: 0; height: 100%; overflow: hidden; }
body { font-family: "Open Sans", "Noto Sans", "Liberation Sans", sans-serif; color: #212529; font-size: 20px; line-height: 1.5; }
a { text-decoration: none; }
.sprite { position: absolute; width: 0; height: 0; overflow: hidden; }
svg { display: block; overflow: visible; }
.chip-m { font: 700 7px "Liberation Sans", sans-serif; fill: currentColor; }
.zoom-word { font: 700 8px "Liberation Sans", sans-serif; fill: #fff; }

.desktop { display: flex; flex-direction: column; height: 100vh; }
.upper { flex: 1; display: flex; min-height: 0; }

/* sidebar */
.sidebar { width: 50px; flex: none; background: #07070c; color: #e8174a; display: flex; flex-direction: column; align-items: center; }
.side-logo { height: 50px; margin-bottom: 34.500px; width: 100%; display: flex; align-items: center; justify-content: center; }
.ico-logo { width: 26px; height: 30px; }
.side-item { height: 56.500px; flex: none; display: flex; align-items: center; justify-content: center; }
.ico-side { width: 22px; height: 22px; }
.ico-chip { width: 26px; height: 26px; }
.side-sep { height: 18.500px; flex: none; display: flex; align-items: center; }
.side-sep.wide { height: 20px; }
.side-sep::before { content: ""; width: 15px; height: 1px; background: #e8174a; }
.side-foot { margin-top: auto; margin-bottom: -1px; }
.side-foot-item { height: 52px; display: flex; align-items: center; justify-content: center; }
.side-foot-item.dim { opacity: .72; }
.ico-dots { width: 20px; height: 20px; }

/* browser chrome */
.browser { flex: 1; min-width: 0; display: flex; flex-direction: column; }
.tabstrip { height: 39px; flex: none; display: flex; align-items: flex-start; padding-left: 4px; background: linear-gradient(90deg, #f0184a 0, #f0184a 1510px, #07070c 1650px) bottom / 100% 1px no-repeat, #07070c; }
.tab-pin { width: 40px; height: 38px; flex: none; display: flex; align-items: center; justify-content: center; }
.gap-7 { margin-left: 7px; }
.gap-8 { margin-left: 8px; }
.gap-4 { margin-left: 4px; }
.gap-2 { margin-left: 2px; }
.gap-1 { margin-left: 1px; }
.ico-tab { width: 20px; height: 20px; }
.tab-active { position: relative; width: 80px; height: 39px; flex: none; margin-left: 3px; display: flex; align-items: center; padding: 0 0 1px 7px; color: #fff; }
.tab-shape { position: absolute; left: -4px; top: 0; width: 88px; height: 39px; }
.tab-fav { position: relative; }
.tab-title { position: relative; font-size: 15px; width: 15px; margin-left: 5px; overflow: hidden; white-space: nowrap; }
.ico-tab-close { position: relative; width: 13px; height: 13px; margin-left: 8px; color: #eee; }
.after-active { margin-left: 1px; }
.tab-plus { width: 40px; height: 38px; display: flex; align-items: center; justify-content: center; margin-left: 1px; color: #e8174a; }
.ico-plus { width: 15px; height: 15px; }
.win-controls { margin-left: auto; display: flex; height: 38px; color: #d0163f; }
.win-btn { width: 50px; display: flex; align-items: center; justify-content: center; }
.ico-win { width: 18px; height: 18px; }
.win-min { width: 16px; height: 1.500px; background: #a8143a; margin-top: 16px; }

.window { flex: 1; min-height: 0; border-left: 1px solid #d0163f; background: #fff; display: flex; flex-direction: column; }
.addressbar { height: 49px; flex: none; background: #12121c; display: flex; align-items: center; color: #a5a4b0; }
.nav-btn { width: 40px; height: 30px; flex: none; display: flex; align-items: center; justify-content: center; }
.nav-btn.first { margin-left: 4px; }
.nav-btn.off { color: #45454f; }
.nav-btn.reload { margin-left: 3px; color: #b5b4bf; }
.nav-btn.web { margin-left: 9.500px; }
.ico-nav { width: 17px; height: 17px; }
.vdots { width: 2px; height: 14px; flex: none; background: repeating-linear-gradient(#33333d 0 2px, transparent 2px 4px); }
.addressbar > .vdots { margin-left: 4px; }
.url { margin-left: 13px; font-size: 15.700px; color: #a5a4b0; white-space: nowrap; letter-spacing: -.3px; }
.url-host { color: #fff; }
.actions { margin-left: auto; display: flex; align-items: center; padding-right: 7px; }
.act { width: 32px; height: 30px; display: flex; align-items: center; justify-content: center; }
.act.nudge { margin-left: 1px; }
.act.user { margin-left: 6px; }
.act.wide { margin-left: 9px; }
.act.wider { margin-left: 10px; }
.act-dots { margin-left: 4px; margin-right: 2px; width: 3px; }
.ico-act { width: 17px; height: 17px; }

/* page */
.container { width: 1387px; margin-left: auto; margin-right: auto; }
.navbar { height: 70px; flex: none; background: #343a40; }
.nav-inner { display: flex; align-items: center; height: 100%; padding-top: 2px; }
.brand { color: #fff; font-size: 25px; margin-right: 19.500px; letter-spacing: -.8px; }
.nav-link { color: rgba(255,255,255,.5); padding: 0 10px; letter-spacing: -.68px; }
.nav-link.active { color: #fff; }
.content { padding-top: 62px; }
.title { margin: 0 0 28px; font-size: 50px; font-weight: 600; line-height: 60px; letter-spacing: -1.750px; }
.btn { display: inline-block; border: 1px solid transparent; color: #fff; letter-spacing: -.45px; }
.btn-primary { display: block; width: 143px; text-align: center; background: #007bff; padding: 8px 0 7px; border-radius: 5px; }
.btn-danger { background: #dc3545; font-size: 17.500px; padding: 5px 10px; border-radius: 4px; letter-spacing: -.4px; margin-top: -1px; }
.table { width: 100%; margin-top: 20px; border-collapse: collapse; table-layout: fixed; }
.c-id { width: 194px; }
.c-name { width: 145px; }
.c-desc { width: 211px; }
.c-price { width: 295px; }
.c-qty { width: 173px; }
.c-exp { width: 213px; }
.c-act { width: 156px; }
.table th, .table td { padding: 16px 15px 14px; text-align: left; vertical-align: top; letter-spacing: -.45px; white-space: nowrap; }
.table th { border-top: 1.250px solid #dee2e6; border-bottom: 2.500px solid #dee2e6; font-weight: 700; letter-spacing: -.55px; }
.table td.word { letter-spacing: -.8px; }
.table td.num { letter-spacing: -.15px; }

/* taskbar */
.taskbar { height: 60px; flex: none; background: #98110c; border-top: 1px solid #7e0f0c; display: flex; align-items: center; color: #fff; }
.weather { position: relative; width: 58px; height: 100%; flex: none; display: flex; align-items: center; padding-left: 12px; }
.ico-weather { width: 34px; height: 34px; margin-top: 3px; }
.temp { position: absolute; left: 24px; top: 8px; height: 20px; width: 29px; border-radius: 10px; background: #2a2525; font-size: 13px; line-height: 20px; text-align: center; letter-spacing: -.3px; }
.start { width: 58px; flex: none; display: flex; justify-content: center; }
.ico-start { width: 29px; height: 29px; }
.search { width: 274px; height: 40px; margin-left: 2px; flex: none; border-radius: 20px; background: rgba(255,255,255,.13); display: flex; align-items: center; padding-left: 15px; position: relative; color: #f3dcdb; }
.ico-search { width: 18px; height: 18px; color: #f3dcdb; }
.search-text { margin-left: 13px; font-size: 16px; }
.ico-football { position: absolute; right: 4px; bottom: 2px; width: 62px; height: 38px; }
.task-row { display: flex; flex: none; margin-left: 3.500px; }
.task { position: relative; width: 55px; height: 58px; flex: none; display: flex; align-items: center; justify-content: center; }
.ico-task { width: 30px; height: 30px; }
.task.run::after, .task.focus::after { content: ""; position: absolute; left: 50%; bottom: 5px; width: 8px; height: 4px; margin-left: -4px; border-radius: 2px; background: rgba(255,255,255,.55); }
.task.focus::before { content: ""; position: absolute; left: 3px; right: 6px; top: 4px; bottom: 4px; border-radius: 6px; background: rgba(255,255,255,.08); box-shadow: 5px 0 0 -1px rgba(255,255,255,.04); }
.task.focus::after { width: 20px; margin-left: -10px; background: #f8806e; }
.task.focus .ico-task { position: relative; width: 30px; height: 32px; }
.tray { display: flex; flex: none; margin-left: 19.500px; }
.tray-item { width: 30px; display: flex; justify-content: center; }
.tray-item.chev { margin-right: 11px; }
.ico-tray { width: 20px; height: 20px; }
.clock { margin-left: auto; padding-right: 24px; margin-top: -3px; display: flex; flex-direction: column; align-items: flex-end; font-size: 15px; line-height: 20px; letter-spacing: -.3px; }
```
